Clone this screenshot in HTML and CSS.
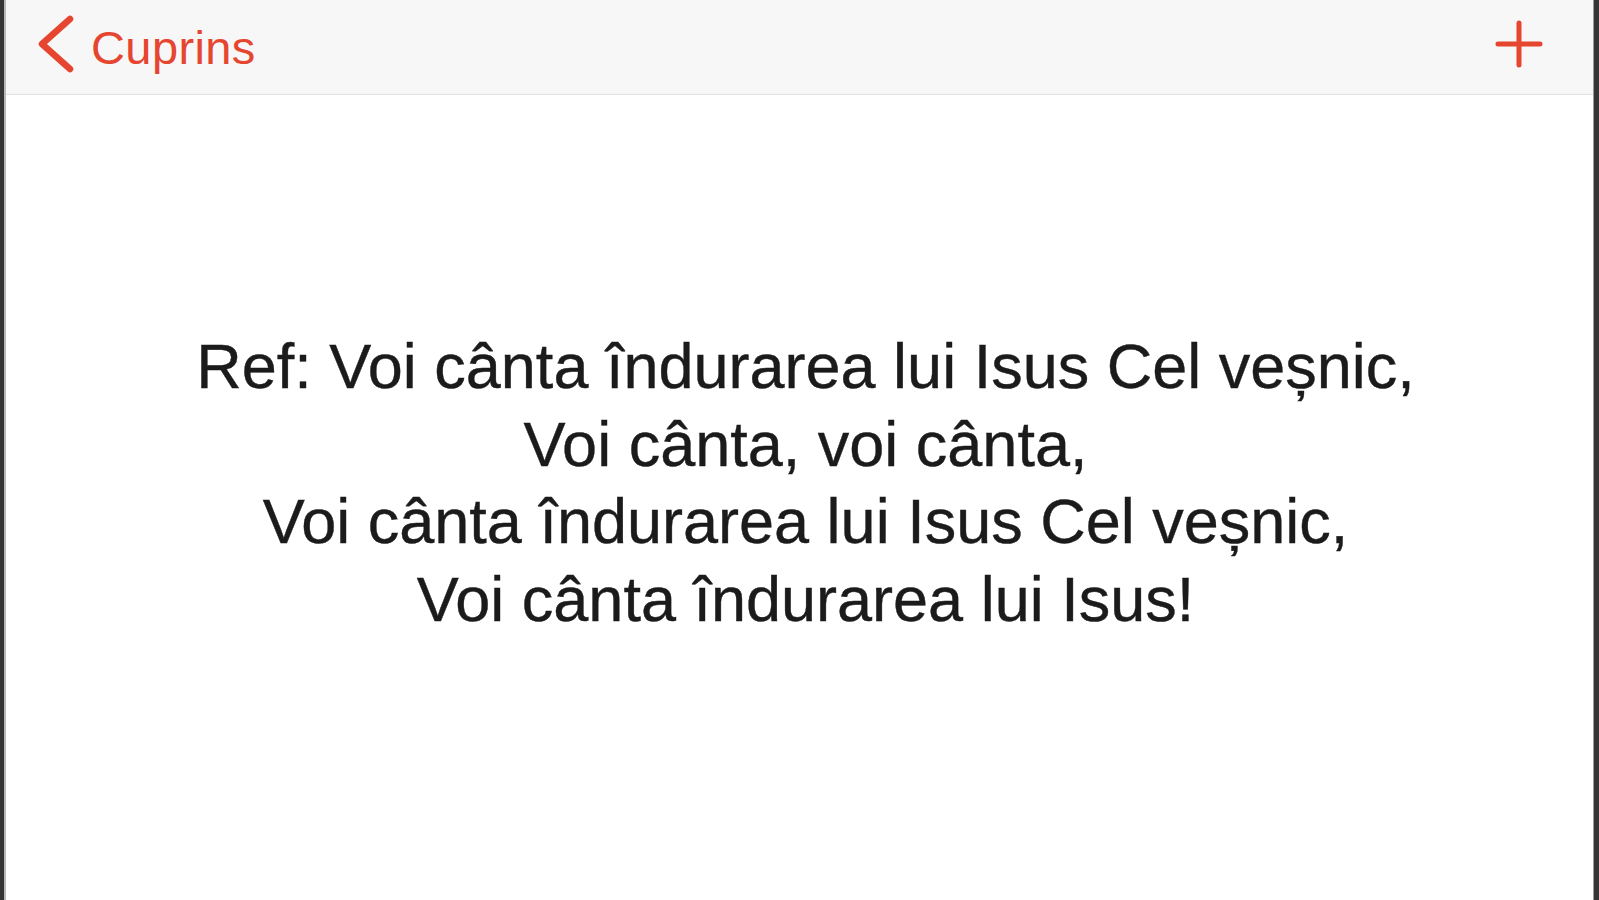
FILE: index.html
```html
<!DOCTYPE html>
<html lang="ro">
<head>
<meta charset="utf-8">
<title>Cuprins</title>
<link rel="stylesheet" href="styles.css">
</head>
<body>
<div class="frame">
  <div class="screen">
    <header class="navbar">
      <a class="back" href="#">
        <svg class="chevron" width="38" height="58" viewBox="0 0 38 58" aria-hidden="true">
          <polyline points="34,4 6,29 34,54" fill="none" stroke="currentColor" stroke-width="6.5" stroke-linecap="round" stroke-linejoin="round"/>
        </svg>
        <span class="back-label">Cuprins</span>
      </a>
      <button class="add" type="button" aria-label="Adaugă">
        <svg width="48" height="48" viewBox="0 0 48 48" aria-hidden="true">
          <path d="M24 3 V45 M3 24 H45" fill="none" stroke="currentColor" stroke-width="5" stroke-linecap="round"/>
        </svg>
      </button>
    </header>
    <main class="content">
      <p class="lyrics">Ref: Voi cânta îndurarea lui Isus Cel veșnic,<br>Voi cânta, voi cânta,<br>Voi cânta îndurarea lui Isus Cel veșnic,<br>Voi cânta îndurarea lui Isus!</p>
    </main>
  </div>
</div>
</body>
</html>
```
FILE: styles.css
```css
html, body {
  margin: 0;
  padding: 0;
  height: 100%;
  background: #ffffff;
}
.frame {
  height: 900px;
  box-sizing: border-box;
  border-left: 4px solid #353535;
  border-right: 5px solid #353535;
  display: flex;
}
.screen {
  flex: 1;
  display: flex;
  flex-direction: column;
  border-left: 2px solid #b8b8b8;
  border-right: 1px solid #9a9a9a;
  background: #fff;
}
.navbar {
  height: 95px;
  flex: none;
  box-sizing: border-box;
  background: #f7f7f7;
  border-bottom: 1px solid #e2e2e2;
  display: flex;
  align-items: center;
  justify-content: space-between;
  padding: 0 50px 0 30px;
  color: #e6452f;
  font-family: "Liberation Sans", Arial, sans-serif;
}
.back {
  display: flex;
  align-items: center;
  color: inherit;
  text-decoration: none;
  gap: 17px;
  margin-top: -6px;
}
.chevron {
  display: block;
}
.back-label {
  font-size: 47px;
  letter-spacing: 0.4px;
  position: relative;
  top: 3px;
}
.add {
  border: 0;
  background: none;
  padding: 0;
  color: inherit;
  display: block;
  margin-top: -6px;
}
.add svg {
  display: block;
}
.content {
  flex: 1;
  padding-top: 233px;
  padding-left: 12px;
  font-family: "Liberation Sans", Arial, sans-serif;
  color: #1b1b1b;
}
.lyrics {
  margin: 0;
  text-align: center;
  font-size: 63px;
  line-height: 77.5px;
  -webkit-text-stroke: 0.4px #1b1b1b;
}
```
